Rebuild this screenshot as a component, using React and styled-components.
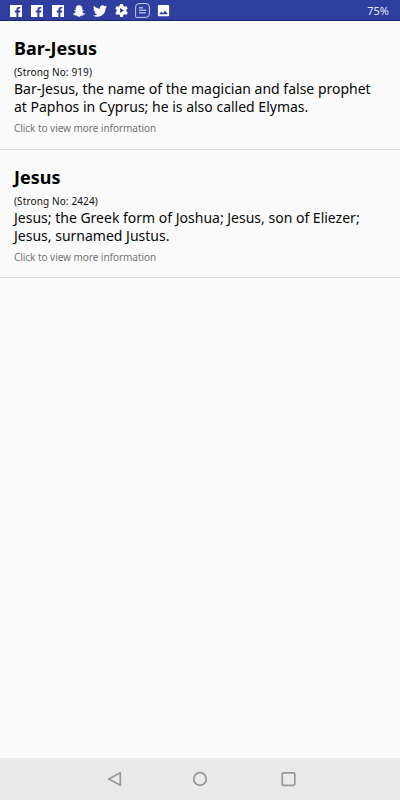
import React from "react";
import styled, { createGlobalStyle } from "styled-components";
import { FaTwitter, FaSnapchatGhost } from "react-icons/fa";
import { MdImage } from "react-icons/md";

const Global = createGlobalStyle`
  body { margin: 0; background: #fafafa; }
`;
const Screen = styled.div`
  width: 400px; height: 800px; display: flex; flex-direction: column;
  background: #fafafa; font-family: "Noto Sans", sans-serif; color: #111; overflow: hidden;
`;
const StatusBar = styled.header`
  box-sizing: border-box; height: 21px; flex: none; background: #303f9f;
  border-bottom: 1px solid #1c2475; display: flex; align-items: center;
  justify-content: space-between; padding: 0 11px 0 5px; color: #e3e5f4;
  font-size: 11px; line-height: 20px;
`;
const Battery = styled.span`padding-top: 1px;`;
const Icons = styled.div`
  display: grid; grid-template-columns: repeat(8, 21.1px); align-items: center;
  justify-items: center; color: #fff; padding-top: 1px;
  svg { display: block; }
`;
const List = styled.main`flex: 1;`;
const Entry = styled.article`
  box-sizing: border-box; height: 128px; padding: 13px 14px 0;
  border-bottom: 1px solid #d8d8d8; white-space: nowrap;
  &:first-child { height: 129px; }
`;
const Title = styled.h2`
  margin: 0; font-size: 18px; line-height: 28px; font-weight: 700; color: #000;
`;
const Strong = styled.div`
  font-size: 10px; line-height: 18px; letter-spacing: 0.12px; color: #111;
  padding-top: 1px; margin-bottom: -1px;
`;
const Line = styled.div`
  font-size: 14px; line-height: 18px; color: #080808;
`;
const Hint = styled.div`
  font-size: 10px; line-height: 24px; letter-spacing: -0.04px; color: #757575;
`;
const NavBar = styled.nav`
  height: 42px; flex: none; background: #eaeaea; display: flex;
  align-items: center; justify-content: center; gap: 72px;
  svg { display: block; fill: none; stroke: #989898; stroke-width: 1.7; overflow: visible; }
`;

const Facebook = () => (
  <svg width="12" height="12" viewBox="0 0 12 12">
    <path fill="currentColor" d="M.4 0H11.6Q12 0 12 .4V11.6Q12 12 11.6 12H8.4V7.4H10L10.3 5.5H8.4V4.4Q8.4 3.6 9.3 3.6H10.3V1.9H8.7Q6.4 1.9 6.4 4.2V5.5H4.8V7.4H6.4V12H.4Q0 12 0 11.6V.4Q0 0 .4 0Z" />
  </svg>
);

const Gear = () => (
  <svg width="13" height="13" viewBox="-6.5 -6.5 13 13">
    <circle r="4.9" fill="currentColor" />
    {[0, 60, 120, 180, 240, 300].map((a) => (
      <rect key={a} x="-1.6" y="-6.4" width="3.2" height="3" rx=".7" fill="currentColor" transform={`rotate(${a})`} />
    ))}
    <path d="M-1.4 -2.4L2.4 0L-1.4 2.4Z" fill="#303f9f" />
  </svg>
);

const Note = () => (
  <svg width="15" height="15" viewBox="0 0 15 15" fill="none">
    <path d="M4 .6H11Q14.4.6 14.4 4V11Q14.4 14.4 11 14.4H1.3Q.6 14.4 .6 13.7V4Q.6.6 4 .6Z" stroke="#c5caeb" strokeWidth="1" />
    <path d="M4 4.7H8M4 7.2H11.2M4 9.7H10.8" stroke="#aab3e5" strokeWidth="1.6" />
  </svg>
);

const entries = [
  {
    name: "Bar-Jesus",
    number: 919,
    lines: ["Bar-Jesus, the name of the magician and false prophet", "at Paphos in Cyprus; he is also called Elymas."],
  },
  {
    name: "Jesus",
    number: 2424,
    lines: ["Jesus; the Greek form of Joshua; Jesus, son of Eliezer;", "Jesus, surnamed Justus."],
  },
];

export default function App() {
  return (
    <Screen>
      <Global />
      <StatusBar>
        <Icons>
          <Facebook />
          <Facebook />
          <Facebook />
          <FaSnapchatGhost size={12} />
          <FaTwitter size={14} />
          <Gear />
          <Note />
          <MdImage size={15} />
        </Icons>
        <Battery>75%</Battery>
      </StatusBar>
      <List>
        {entries.map((e) => (
          <Entry key={e.number}>
            <Title>{e.name}</Title>
            <Strong>{`(Strong No: ${e.number})`}</Strong>
            {e.lines.map((l) => <Line key={l}>{l}</Line>)}
            <Hint>Click to view more information</Hint>
          </Entry>
        ))}
      </List>
      <NavBar>
        <svg width="16" height="16" viewBox="0 0 16 16"><path d="M16.3 1.8V14.3L4.8 8.1Z" strokeLinejoin="round" /></svg>
        <svg width="16" height="16" viewBox="0 0 16 16"><circle cx="8" cy="8" r="6.3" /></svg>
        <svg width="16" height="16" viewBox="0 0 16 16"><rect x="2.2" y="1.8" width="12.6" height="12.6" rx="1.3" /></svg>
      </NavBar>
    </Screen>
  );
}
